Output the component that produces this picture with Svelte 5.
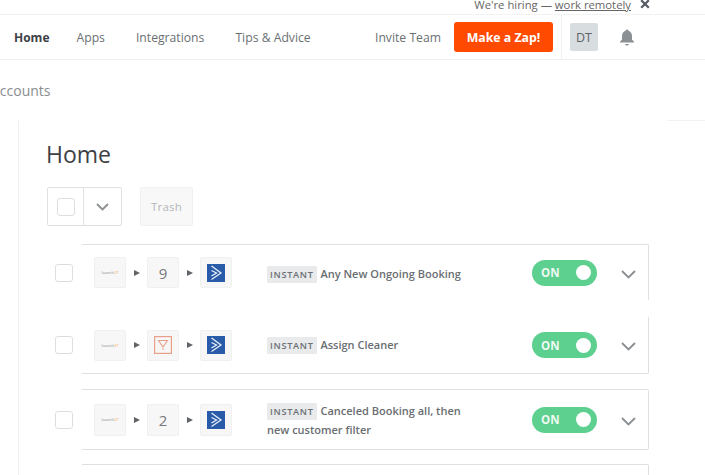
<script>
	const rows = [
		{ id: 1, middle: '9', title: 'Any New Ongoing Booking', cls: 'first' },
		{ id: 2, middle: 'filter', title: 'Assign Cleaner', cls: 'second' },
		{ id: 3, middle: '2', title: 'Canceled Booking all, then new customer filter', cls: 'third' }
	]
</script>

<div class="page">
	<div class="hiring">
		<span>We're hiring — <u>work remotely</u></span>
		<svg class="close" width="10" height="10" viewBox="0 0 10 10">
			<path d="M1.2 1.2 8.8 8.8M8.8 1.2 1.2 8.8" />
		</svg>
	</div>

	<nav class="nav">
		<a href="#home" class="active">Home</a>
		<a href="#apps">Apps</a>
		<a href="#integrations">Integrations</a>
		<a href="#tips">Tips &amp; Advice</a>
		<a href="#invite" class="invite">Invite Team</a>
		<button class="zap">Make a Zap!</button>
		<div class="account">
			<span class="avatar">DT</span>
			<svg class="bell" width="16" height="17" viewBox="0 0 16 17">
				<path d="M8 0.5c.8 0 1.3.5 1.4 1.2C11.800 2.400 13 4.300 13 7v3.500l2 2.300v.7H1v-.7l2-2.300V7c0-2.700 1.200-4.600 3.600-5.300C6.700 1 7.200.5 8 .5z" />
				<path d="M6 15h4c-.2.900-1 1.500-2 1.500S6.200 15.900 6 15z" />
			</svg>
		</div>
	</nav>

	<div class="crumb">Accounts</div>

	<div class="panel-top"></div>

	<main class="panel">
		<h1>Home</h1>

		<div class="controls">
			<div class="select">
				<span class="check-cell"><span class="checkbox"></span></span>
				<span class="chev-cell">
					<svg width="13" height="8" viewBox="0 0 13 8"><path class="chev" d="M1 1l5.500 5.500L12 1" /></svg>
				</span>
			</div>
			<button class="trash">Trash</button>
		</div>

		<div class="list">
			{#each rows as row (row.id)}
				<div class="row {row.cls}">
					<span class="checkbox"></span>
					<div class="card">
						<div class="steps">
							<span class="step"><span class="brand">launch<b>27</b></span></span>
							<span class="play"></span>
							<span class="step">
								{#if row.middle === 'filter'}
									<svg width="18" height="18" viewBox="0 0 18 18">
										<rect x=".6" y=".6" width="16.800" height="16.800" fill="none" stroke="#e8a08a" stroke-width="1.200" />
										<path d="M4.500 4.500h9L9 11z" fill="none" stroke="#e8a08a" stroke-width="1.100" />
										<circle cx="9" cy="13.300" r=".8" fill="#e8a08a" />
									</svg>
								{:else}
									{row.middle}
								{/if}
							</span>
							<span class="play"></span>
							<span class="step">
								<svg width="18" height="18" viewBox="0 0 18 18">
									<rect width="18" height="18" fill="#2a5ba8" />
									<path d="M4.500 2 14 9l-9.500 6.500M4.500 6.500 9.500 9l-5 3" fill="none" stroke="#e6eefa" stroke-width="1.300" />
								</svg>
							</span>
						</div>
						<div class="title"><span class="tag">INSTANT</span> {row.title}</div>
						<div class="toggle"><span>ON</span><i></i></div>
						<svg class="expand" width="15" height="9" viewBox="0 0 15 9"><path class="chev" d="M1 1l6.500 6.500L14 1" /></svg>
					</div>
				</div>
			{/each}
			<div class="row last"><div class="card"></div></div>
		</div>
	</main>
</div>

<style>
	:global(body) {
		margin: 0;
		background: #fff;
	}

	.page {
		width: 705px;
		height: 475px;
		overflow: hidden;
		font-family: 'Open Sans', sans-serif;
		color: #5f6368;
		position: relative;
	}

	.hiring {
		height: 14px;
		display: flex;
		justify-content: flex-end;
		align-items: center;
		gap: 9px;
		padding-right: 55px;
		font-size: 11.300px;
		line-height: 10px;
		color: #666;
		overflow: hidden;
		border-bottom: 1px solid #f2f2f2;
	}

	.hiring span {
		margin-top: -5px;
	}

	.close {
		margin-top: -7px;
	}

	.close path {
		stroke: #555c63;
		stroke-width: 2.200;
		fill: none;
	}

	.nav {
		height: 44px;
		display: flex;
		align-items: center;
		border-bottom: 1px solid #f0f0f0;
		padding: 0 70px 0 14px;
		font-size: 12.200px;
	}

	.nav a {
		color: #6b6f73;
		text-decoration: none;
		margin-right: 31px;
	}

	.nav a.active {
		color: #3d4145;
		font-weight: 700;
		font-size: 12px;
		margin-right: 27px;
	}

	.nav a.invite {
		margin-left: auto;
		margin-right: 13px;
	}

	.zap {
		width: 99px;
		height: 30px;
		padding: 0;
		border: 0;
		border-radius: 3px;
		background: #ff4a00;
		color: #fff;
		font: 700 12.300px 'Open Sans', sans-serif;
	}

	.account {
		height: 44px;
		margin-left: 8px;
		padding-left: 8px;
		border-left: 1px solid #f0f0f0;
		display: flex;
		align-items: center;
		gap: 21px;
	}

	.avatar {
		width: 28px;
		height: 28px;
		border-radius: 2px;
		background: #d8dde0;
		color: #5f6368;
		display: flex;
		align-items: center;
		justify-content: center;
		font-size: 12.500px;
	}

	.bell {
		fill: #8b9094;
	}

	.crumb {
		margin-left: -9px;
		margin-top: 22px;
		font-size: 14px;
		line-height: 18px;
		color: #8a8d90;
	}

	.panel-top {
		position: absolute;
		left: 667px;
		top: 120px;
		width: 38px;
		border-top: 1px solid #f3f3f3;
	}

	.panel {
		margin: 21px 0 0 18px;
		padding: 17px 0 0 27px;
		border-left: 1px solid #f0f0f0;
	}

	h1 {
		margin: 0;
		font-size: 23px;
		font-weight: 400;
		line-height: 32px;
		color: #3d4145;
	}

	.controls {
		display: flex;
		gap: 18px;
		margin: 17px 0 18px 1px;
	}

	.select {
		width: 75px;
		height: 39px;
		box-sizing: border-box;
		border: 1px solid #e1e1e1;
		border-radius: 2px;
		display: flex;
	}

	.check-cell {
		width: 35px;
		display: flex;
		align-items: center;
		justify-content: center;
		border-right: 1px solid #e1e1e1;
	}

	.chev-cell {
		flex: 1;
		display: flex;
		align-items: center;
		justify-content: center;
	}

	.chev {
		fill: none;
		stroke: #8b8f92;
		stroke-width: 1.800;
	}

	.checkbox {
		display: block;
		flex: none;
		box-sizing: border-box;
		width: 18px;
		height: 18px;
		border: 1px solid #dedede;
		border-radius: 3px;
		background: #fff;
	}

	.trash {
		width: 53px;
		height: 39px;
		padding: 0;
		border: 1px solid #f0f0f0;
		border-radius: 2px;
		background: #f8f8f8;
		color: #b5b7b8;
		font: 11.500px 'Open Sans', sans-serif;
		letter-spacing: .2px;
	}

	.list {
		margin-left: -27px;
		display: flex;
		flex-direction: column;
	}

	.row {
		display: flex;
		align-items: center;
		padding-left: 36px;
		gap: 9px;
		width: 594px;
	}

	.card {
		flex: 1;
		box-sizing: border-box;
		height: 100%;
		display: flex;
		align-items: center;
		border: 1px solid #dfdfdf;
		border-left: 0;
		border-radius: 0 2px 2px 0;
		padding-left: 12px;
	}

	.first {
		height: 57px;
		margin-bottom: 15px;
	}

	.first .card {
		border-bottom-color: transparent;
	}

	.first .title {
		margin-top: 4px;
	}

	.second {
		height: 58px;
		margin-bottom: 15px;
	}

	.second .card {
		border-top-color: transparent;
	}

	.second .title {
		margin-top: 1px;
	}

	.third {
		height: 61px;
		margin-bottom: 14px;
	}

	.third .step {
		height: 32px;
	}

	.last {
		height: 40px;
		padding-left: 63px;
		gap: 0;
		width: 567px;
	}

	.steps {
		display: flex;
		align-items: center;
		width: 173px;
		flex: none;
	}

	.step {
		width: 32px;
		height: 31px;
		box-sizing: border-box;
		background: #f7f7f7;
		border: 1px solid #f0f0f0;
		border-radius: 2px;
		display: flex;
		align-items: center;
		justify-content: center;
		font-size: 15px;
		color: #77797b;
	}

	.brand {
		font-size: 4px;
		color: #8a8a8a;
		white-space: nowrap;
	}

	.brand b {
		color: #f0a94a;
		font-weight: 400;
	}

	.play {
		width: 0;
		height: 0;
		margin: 0 7px 0 8px;
		border-left: 6px solid #606468;
		border-top: 3.500px solid transparent;
		border-bottom: 3.500px solid transparent;
	}

	.title {
		width: 200px;
		flex: none;
		margin-top: 2px;
		font-size: 11px;
		font-weight: 600;
		line-height: 18px;
		color: #6a6e72;
	}

	.tag {
		background: #e8eaec;
		color: #6b7074;
		border-radius: 1px;
		padding: 2px 3px;
		font-size: 9.200px;
		letter-spacing: .7px;
		margin-right: 1px;
	}

	.toggle {
		margin-left: 65px;
		width: 65px;
		height: 26px;
		flex: none;
		box-sizing: border-box;
		padding: 0 6px 0 9px;
		border-radius: 13px;
		background: #5dcf8f;
		color: #eefaf3;
		display: flex;
		align-items: center;
		justify-content: space-between;
		font-size: 11.500px;
		font-weight: 700;
	}

	.toggle i {
		width: 15px;
		height: 15px;
		border-radius: 50%;
		background: #fff;
	}

	.expand {
		margin-left: 24px;
		margin-top: 3px;
		flex: none;
	}
</style>
